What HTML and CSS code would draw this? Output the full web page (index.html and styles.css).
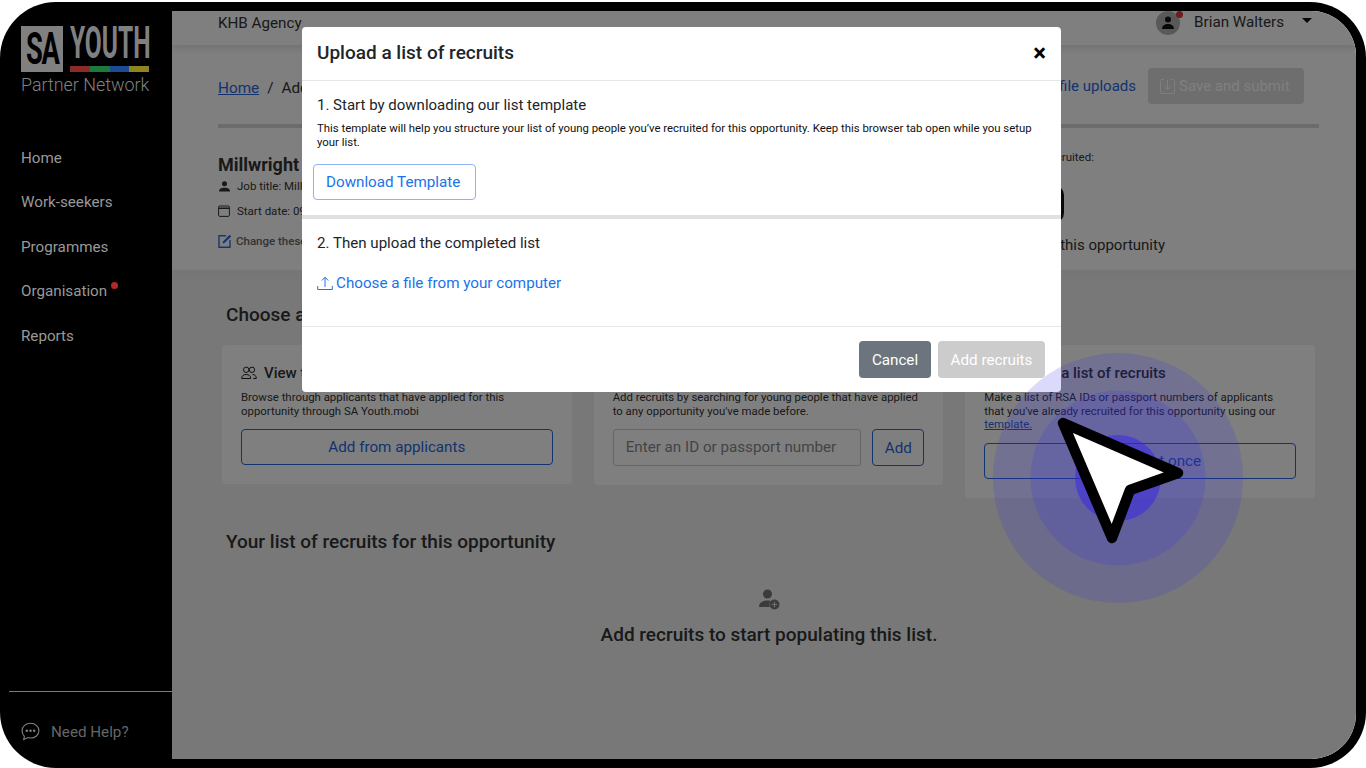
FILE: index.html
```html
<!DOCTYPE html>
<html lang="en">

<head>
	<meta charset="UTF-8">
	<title>SA Youth Partner Network</title>
	<link rel="stylesheet" href="styles.css">
</head>

<body>
	<div class="bezel">
		<aside class="sidebar">
			<div class="logo">
				<div class="logo-sa"><span>SA</span></div>
				<div class="logo-right">
					<div class="logo-youth"><span>YOUTH</span></div>
					<div class="logo-bar"><i class="red"></i><i class="green"></i><i class="blue"></i><i class="yellow"></i></div>
				</div>
			</div>
			<div class="logo-name">Partner Network</div>
			<nav class="nav">
				<a>Home</a>
				<a>Work-seekers</a>
				<a>Programmes</a>
				<a class="has-dot">Organisation</a>
				<a>Reports</a>
			</nav>
			<div class="help">
				<svg width="19" height="19" viewBox="0 0 19 19" fill="none" stroke="#808080" stroke-width="1.1">
					<path d="M9.5 1.2c4.7 0 8.4 3.2 8.4 7.5s-3.7 7.3-8.4 7.3c-.9 0-1.8-.1-2.6-.4l-4.2 1.9.7-3.2C2 13 1.1 11 1.1 8.7c0-4.3 3.700-7.500 8.400-7.500z"/>
					<circle cx="5.800" cy="8.800" r=".7" fill="#808080"/>
					<circle cx="9.500" cy="8.800" r=".7" fill="#808080"/>
					<circle cx="13.200" cy="8.800" r=".7" fill="#808080"/>
				</svg>
				<span>Need Help?</span>
			</div>
		</aside>

		<main class="app">
			<header class="topbar">
				<span>KHB Agency</span>
				<div class="user">
					<div class="avatar">
						<svg width="14" height="14" viewBox="0 0 14 14" fill="#111"><circle cx="7" cy="3.600" r="3"/><path d="M1 13c0-3.400 2.600-5 6-5s6 1.600 6 5z"/></svg>
					</div>
					<span class="user-name">Brian Walters</span>
					<span class="caret"></span>
				</div>
			</header>

			<section class="details">
				<div class="crumbs">
					<div class="crumb-path"><a href="#">Home</a><b>/</b><span>Add recruits</span></div>
					<div class="crumb-actions">
						<a class="uploads-link">View previous file uploads</a>
						<button class="btn-save">
							<svg width="17" height="17" viewBox="0 0 17 17" fill="none" stroke="currentColor" stroke-width="1"><path d="M5 1.500H2.500a1 1 0 0 0-1 1v12a1 1 0 0 0 1 1h12a1 1 0 0 0 1-1v-12a1 1 0 0 0-1-1H12"/><path d="M8.500 2v9M5.500 8.500l3 3 3-3"/></svg>
							Save and submit
						</button>
					</div>
				</div>
				<div class="rule"></div>
				<div class="job">
					<div class="job-info">
						<h2>Millwright</h2>
						<div class="meta meta-job">
							<svg width="11" height="11" viewBox="0 0 14 14" fill="#333"><circle cx="7" cy="3.600" r="3.200"/><path d="M0 13.500c0-3.800 3-5 7-5s7 1.200 7 5z"/></svg>
							<span>Job title: Millwright</span>
						</div>
						<div class="meta meta-date">
							<svg width="12" height="12" viewBox="0 0 12 12" fill="none" stroke="#333" stroke-width="1"><rect x=".6" y="1" width="10.800" height="10.400" rx="1.200"/><path d="M.6 3.300h10.800" stroke-width="1.400"/></svg>
							<span>Start date: 09 August 2021</span>
						</div>
						<div class="meta meta-edit">
							<svg width="14" height="14" viewBox="0 0 14 14" fill="none" stroke="#2a6fe0" stroke-width="1.400"><path d="M8 1.800H1v11.400h11V6"/><path d="M4.500 9.500l.5-2L11.500.8l1.700 1.700L6.500 9z" fill="#2a6fe0" stroke="none"/></svg>
							<span>Change these details</span>
						</div>
					</div>
					<div class="job-count">
						<span class="count-label">Young people you've recruited:</span>
						<div class="count-box"></div>
						<span class="count-note">recruits added to this opportunity</span>
					</div>
				</div>
			</section>

			<section class="options">
				<h3 class="options-title">Choose an option to add recruits</h3>
				<div class="cards">
					<div class="card">
						<div class="card-title">
							<svg width="16" height="14" viewBox="0 0 16 14" fill="none" stroke="#222" stroke-width="1"><circle cx="5.200" cy="3.800" r="2.700"/><circle cx="11" cy="3.800" r="2.700"/><path d="M.7 12.500c0-2.600 1.800-4 4.500-4s4.500 1.400 4.500 4zM11.500 8.500c2.300 0 3.800 1.400 3.800 4h-3"/></svg>
							<span>View the applicants</span>
						</div>
						<p>Browse through applicants that have applied for this opportunity through SA Youth.mobi</p>
						<button class="btn-outline">Add from applicants</button>
					</div>
					<div class="card">
						<div class="card-title">
							<svg width="16" height="14" viewBox="0 0 16 14" fill="none" stroke="#222" stroke-width="1"><circle cx="6.500" cy="6" r="4.500"/><path d="M10 9.500l4 4"/></svg>
							<span>Search for a person</span>
						</div>
						<p>Add recruits by searching for young people that have applied to any opportunity you've made before.</p>
						<div class="search">
							<div class="search-input">Enter an ID or passport number</div>
							<button class="btn-outline btn-add">Add</button>
						</div>
					</div>
					<div class="card">
						<div class="card-title">
							<svg width="19" height="14" viewBox="0 0 16 14" fill="none" stroke="#222" stroke-width="1"><path d="M8 10V1.500M5 4.500l3-3 3 3M1 9.500v3.500h14V9.500"/></svg>
							<span>Upload a list of recruits</span>
						</div>
						<p>Make a list of RSA IDs or passport numbers of applicants that you've already recruited for this opportunity using our <a href="#">template.</a></p>
						<button class="btn-outline">Add many at once</button>
					</div>
				</div>
				<h3 class="list-title">Your list of recruits for this opportunity</h3>
				<div class="empty">
					<svg width="21" height="21" viewBox="0 0 21 21"><circle cx="8.500" cy="5" r="4.500" fill="#777"/><path d="M0 18c0-4.500 3.500-6.500 8.500-6.500 1.200 0 2.300.1 3.300.4-1.500 1.400-2 3.800-1 6.100z" fill="#777"/><circle cx="15.500" cy="15.500" r="5" fill="#777"/><path d="M15.500 12.800v5.400M12.800 15.500h5.400" stroke="#ddd" stroke-width="1.200"/></svg>
					<p>Add recruits to start populating this list.</p>
				</div>
			</section>
			<div class="backdrop"></div>
		</main>

		<!-- Upload modal -->
		<div class="modal">
			<div class="modal-head">
				<h1>Upload a list of recruits</h1>
				<span class="modal-close">×</span>
			</div>
			<div class="modal-step step-one">
				<h4>1. Start by downloading our list template</h4>
				<p>This template will help you structure your list of young people you’ve recruited for this opportunity. Keep this browser tab open while you setup your list.</p>
				<button class="btn-template">Download Template</button>
			</div>
			<div class="modal-step step-two">
				<h4>2. Then upload the completed list</h4>
				<a class="file-link">
					<svg width="16" height="15" viewBox="0 0 16 15" fill="none" stroke="#1a73e8" stroke-width="1"><path d="M8 11V1.500M4.800 4.500L8 1.200l3.200 3.300M.7 10v3.500h14.600V10"/></svg>
					<span>Choose a file from your computer</span>
				</a>
			</div>
			<div class="modal-foot">
				<button class="btn-cancel">Cancel</button>
				<button class="btn-submit">Add recruits</button>
			</div>
		</div>
	</div>

	<!-- Click highlight -->
	<div class="ripple ripple-outer"></div>
	<div class="ripple ripple-mid"></div>
	<div class="ripple ripple-inner"></div>
	<svg class="pointer" width="140" height="140" viewBox="0 0 140 140">
		<polygon points="13,13 128,63 80,80 62,128" fill="#fff" stroke="#000" stroke-width="10.500" stroke-linejoin="round"/>
	</svg>
</body>

</html>
```

FILE: styles.css
```css
:root {
	--blue: #1a73e8;
	--page-blue: #2566e0;
}

* {
	box-sizing: border-box;
}

body {
	margin: 0;
	width: 1366px;
	height: 768px;
	overflow: hidden;
	position: relative;
	background-color: #fff;
	font-family: Roboto, "Liberation Sans", sans-serif;
	color: #333;
}

button {
	font-family: inherit;
}

.bezel {
	position: relative;
	display: flex;
	height: 766px;
	margin-top: 2px;
	background-color: #000;
	border-radius: 56px;
	overflow: hidden;
}

/* Sidebar */
.sidebar {
	display: flex;
	flex-direction: column;
	flex: 0 0 172px;
	padding: 24px 0 0 21px;
	color: #999;
}

.logo {
	display: flex;
	gap: 7px;
	height: 46px;
}

.logo-sa {
	display: flex;
	align-items: center;
	justify-content: center;
	width: 42px;
	height: 46px;
	background-color: #808080;
	color: #000;
	font-weight: 700;
	font-size: 44px;
	line-height: 44px;
}

.logo-sa span {
	display: inline-block;
	transform: scaleX(0.62);
	letter-spacing: -2px;
}

.logo-right {
	width: 79px;
}

.logo-youth {
	height: 35px;
	line-height: 35px;
	color: #808080;
	font-weight: 700;
	font-size: 44px;
	white-space: nowrap;
}

.logo-youth span {
	display: inline-block;
	transform: scaleX(0.558);
	transform-origin: left center;
}

.logo-bar {
	display: flex;
	height: 6px;
	margin-top: 5px;
}

.logo-bar i {
	flex: 1;
}

.red { background-color: #8a2a2a; }
.green { background-color: #1c7a3c; }
.blue { background-color: #1c4a94; }
.yellow { background-color: #8f8420; }

.logo-name {
	margin-top: 2px;
	font-size: 17.900px;
	font-weight: 300;
	line-height: 21px;
	color: #808080;
	white-space: nowrap;
}

.nav {
	display: flex;
	flex-direction: column;
	gap: 27px;
	margin-top: 54.500px;
	font-size: 15.200px;
	line-height: 17.500px;
}

.has-dot {
	position: relative;
	width: max-content;
}

.has-dot::after {
	content: "";
	position: absolute;
	top: -1px;
	right: -11px;
	width: 7px;
	height: 7px;
	border-radius: 50%;
	background-color: #b02a2a;
}

.help {
	display: flex;
	align-items: center;
	gap: 11px;
	height: 68px;
	margin: auto 0 9px -12px;
	padding: 12px 0 0 12px;
	border-top: 1px solid #7a7a7a;
	font-size: 15.200px;
	color: #666;
}

/* Page behind the modal */
.app {
	position: relative;
	display: flex;
	flex-direction: column;
	flex: 1;
	margin: 9px 10px 9px 0;
	border-radius: 0 45px 45px 0;
	overflow: hidden;
	background-color: #f0f0f0;
}

.backdrop {
	position: absolute;
	inset: 0;
	background-color: rgba(0, 0, 0, 0.5);
}

.topbar {
	position: relative;
	display: flex;
	align-items: center;
	justify-content: space-between;
	flex: 0 0 34px;
	padding: 0 44px 10px 46px;
	background-color: #fff;
	font-size: 15.200px;
	box-shadow: 0 3px 8px rgba(0, 0, 0, 0.12);
}

.user {
	display: flex;
	align-items: center;
}

.avatar {
	position: relative;
	display: flex;
	align-items: center;
	justify-content: center;
	width: 24px;
	height: 24px;
	border-radius: 50%;
	background-color: #b3b3b3;
}

.avatar::after {
	content: "";
	position: absolute;
	top: 0;
	right: -3px;
	width: 7px;
	height: 7px;
	border-radius: 50%;
	background-color: #d83a3a;
}

.user-name {
	margin: 0 0 3px 14px;
}

.caret {
	width: 0;
	height: 0;
	margin: 0 0 5px 18px;
	border: 5px solid transparent;
	border-top-color: #111;
	border-bottom-width: 0;
}

.details {
	flex: 0 0 225px;
	padding: 23px 37px 0 46px;
	background-color: #fff;
}

.crumbs {
	display: flex;
	align-items: center;
	justify-content: space-between;
	height: 36px;
	padding-right: 15px;
	font-size: 15.300px;
}

.crumb-path {
	padding-top: 4px;
}

.crumb-path b {
	margin: 0 8px;
	font-weight: 400;
}

.crumb-path a {
	color: var(--page-blue);
}

.crumb-actions {
	display: flex;
	align-items: center;
	gap: 12px;
}

.uploads-link {
	color: var(--page-blue);
	font-size: 15px;
}

.btn-save {
	display: flex;
	align-items: center;
	gap: 3px;
	width: 156px;
	height: 36px;
	padding: 0 11px;
	border: 0;
	border-radius: 4px;
	background-color: #dcdcdc;
	color: #fff;
	font-size: 15px;
}

.rule {
	height: 4px;
	margin-top: 20px;
	background-color: #d8d8d8;
}

.job {
	display: flex;
	justify-content: space-between;
}

.job-info h2 {
	margin: 26px 0 0;
	font-size: 18px;
	line-height: 22px;
	font-weight: 700;
}

.meta {
	display: flex;
	align-items: center;
	gap: 7px;
	font-size: 11.500px;
	line-height: 14px;
}

.meta-job {
	margin-top: 3px;
	padding-left: 1px;
}

.meta-date {
	margin-top: 11px;
}

.meta-edit {
	gap: 4px;
	margin-top: 16px;
	font-weight: 500;
	color: #666;
}

.job-count {
	display: flex;
	flex-direction: column;
	align-items: flex-end;
	padding: 22px 154px 0 0;
}

.count-label {
	margin-right: 71px;
	font-size: 11.500px;
	line-height: 14px;
}

.count-box {
	width: 42px;
	height: 38px;
	margin: 21px 101px 0 0;
	border: 3px solid #111;
	border-radius: 10px;
	background-color: #fff;
}

.count-note {
	margin-top: 13px;
	font-size: 15px;
	line-height: 18px;
}

.options {
	flex: 1;
	padding: 33px 41px 0 54px;
	background-image: linear-gradient(#ececec, #f0f0f0 12px);
}

.options h3 {
	margin: 0;
	font-size: 19px;
	line-height: 24px;
	font-weight: 500;
}

.cards {
	display: grid;
	grid-template-columns: repeat(3, 1fr);
	gap: 22px;
	align-items: start;
	margin: 18px 0 0 -4px;
}

.card {
	padding: 18px 19px 19px;
	border-radius: 4px;
	background-color: #fff;
}

.card-title {
	display: flex;
	align-items: center;
	gap: 7px;
	height: 20px;
	font-size: 15px;
	font-weight: 500;
}

.card p {
	max-width: 308px;
	margin: 8px 0 11px;
	font-size: 11.400px;
	line-height: 13.500px;
}

.card p a {
	color: var(--page-blue);
}

.btn-outline {
	width: 100%;
	height: 36px;
	border: 1px solid var(--page-blue);
	border-radius: 4px;
	background-color: #fff;
	color: var(--page-blue);
	font-size: 15.200px;
}

.search {
	display: flex;
	gap: 11px;
}

.search-input {
	flex: 1;
	height: 37px;
	padding: 0 12px;
	border: 1px solid #ccc;
	border-radius: 3px;
	background-color: #fff;
	color: #888;
	font-size: 15.200px;
	line-height: 35px;
}

.btn-add {
	flex: 0 0 52px;
	height: 37px;
}

.options .list-title {
	margin-top: 32px;
}

.empty {
	display: flex;
	flex-direction: column;
	align-items: center;
	margin: 35px 0 0 -3px;
}

.empty p {
	margin: 14px 0 0;
	font-size: 19px;
	line-height: 22px;
	font-weight: 500;
}

/* Modal */
.modal {
	position: absolute;
	top: 25px;
	left: 302px;
	width: 759px;
	height: 365px;
	border-radius: 4px;
	background-color: #fff;
	color: #212529;
}

.modal-head {
	display: flex;
	align-items: center;
	justify-content: space-between;
	height: 54px;
	padding: 0 15px 2px;
	border-bottom: 1px solid #e6e6e6;
}

.modal-head h1 {
	margin: 0;
	font-size: 19px;
	font-weight: 500;
}

.modal-close {
	color: #000;
	font-size: 24px;
	font-weight: 700;
}

.modal-step h4 {
	margin: 0;
	font-size: 15px;
	line-height: 18px;
	font-weight: 400;
}

.step-one {
	height: 138px;
	padding: 15px 15px 0;
	border-bottom: 4px solid #e0e0e0;
}

.step-one p {
	margin: 7px 0 15px;
	font-size: 11.380px;
	line-height: 14px;
	color: #111;
}

.btn-template {
	display: block;
	width: 163px;
	height: 36px;
	margin-left: -4px;
	padding-left: 12px;
	border: 1px solid #8db4f0;
	border-radius: 4px;
	background-color: #fff;
	color: var(--blue);
	font-size: 15.200px;
	text-align: left;
}

.step-two {
	height: 108px;
	padding: 15px 15px 0;
	border-bottom: 1px solid #e6e6e6;
}

.step-two h4 {
	font-size: 15.100px;
}

.file-link {
	display: flex;
	align-items: center;
	gap: 3px;
	margin-top: 22px;
	color: var(--blue);
	font-size: 15.200px;
	line-height: 18px;
}

.modal-foot {
	display: flex;
	justify-content: flex-end;
	gap: 7px;
	padding: 14px 16px 0 0;
}

.modal-foot button {
	height: 37px;
	border: 0;
	border-radius: 4px;
	color: #fff;
	font-size: 15.200px;
}

.btn-cancel {
	width: 72px;
	background-color: #6c757d;
}

.btn-submit {
	width: 107px;
	background-color: #ccc;
}

/* Click highlight over everything */
.ripple {
	position: absolute;
	left: 1117.500px;
	top: 478px;
	border-radius: 50%;
	background-color: rgba(58, 50, 230, 0.18);
	transform: translate(-50%, -50%);
}

.ripple-outer {
	width: 250px;
	height: 250px;
}

.ripple-mid {
	width: 175px;
	height: 175px;
	background-color: rgba(58, 50, 230, 0.2);
}

.ripple-inner {
	width: 86px;
	height: 86px;
	background-color: rgba(58, 40, 230, 0.55);
}

.pointer {
	position: absolute;
	left: 1050px;
	top: 410px;
}
```
